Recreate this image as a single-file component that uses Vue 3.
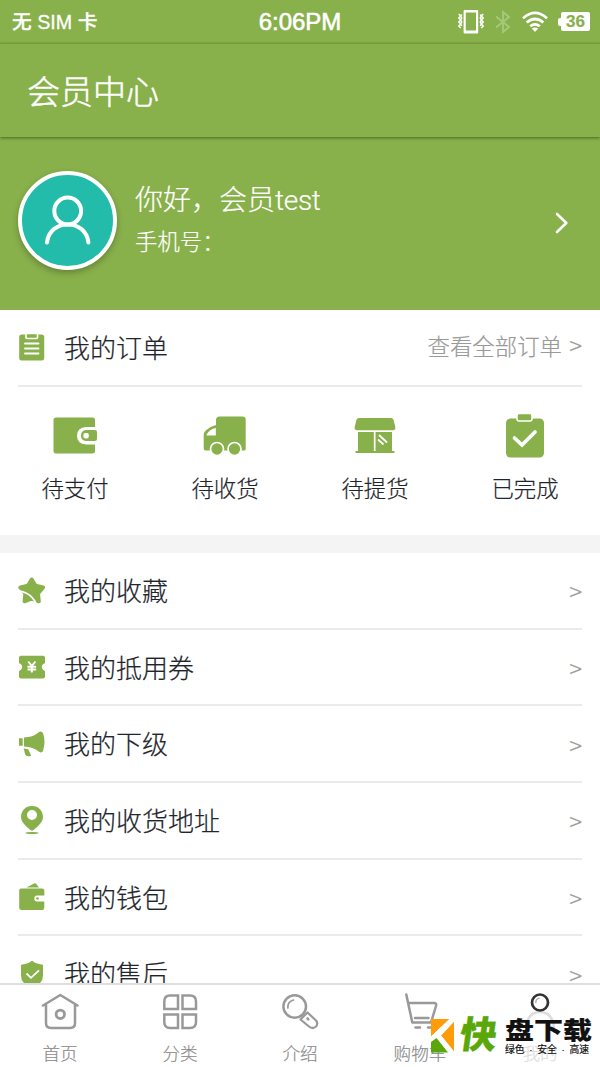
<script setup>
const orders = [
  { label: '待支付', icon: 'pay' },
  { label: '待收货', icon: 'truck' },
  { label: '待提货', icon: 'shop' },
  { label: '已完成', icon: 'done' },
]
const rows = [
  { label: '我的收藏', icon: 'star' },
  { label: '我的抵用券', icon: 'coupon' },
  { label: '我的下级', icon: 'horn' },
  { label: '我的收货地址', icon: 'pin' },
  { label: '我的钱包', icon: 'wallet' },
  { label: '我的售后', icon: 'shield' },
]
const tabs = [
  { label: '首页', icon: 'home' },
  { label: '分类', icon: 'grid' },
  { label: '介绍', icon: 'search' },
  { label: '购物车', icon: 'cart' },
  { label: '我的', icon: 'user' },
]
</script>

<template>
  <div class="screen">
    <div class="status">
      <span class="carrier">无 SIM 卡</span>
      <span class="time">6:06PM</span>
      <div class="indicators">
        <svg class="vibrate" width="26" height="26" viewBox="0 0 26 26" fill="none" stroke="#fff">
          <path fill="#fff" stroke="none" fill-rule="evenodd" d="M6.600 1h12.600q1 0 1 1v21.600q0 1-1 1H6.600q-1 0-1-1V2q0-1 1-1ZM7.800 3.500v18h10.200v-18Z" />
          <path stroke-width="1.500" d="M.7 5l2 2-2 2 2 2-2 2 2 2-2 2 2 2M3.700 5.500l-1 1.500 1 2-1 2 1 2-1 2 1 2M25.300 5l-2 2 2 2-2 2 2 2-2 2 2 2-2 2M22.300 5.500l1 1.500-1 2 1 2-1 2 1 2-1 2" />
        </svg>
        <svg class="bluetooth" width="16" height="24" viewBox="0 0 16 24" fill="none" stroke="#a5c978" stroke-width="1.900">
          <path d="M1 6.500 14 17l-6 5V2l6 5L1 17.500" />
        </svg>
        <svg class="wifi" width="26" height="22" viewBox="0 0 26 22" fill="none" stroke="#fff" stroke-width="2.700">
          <path d="M1 7.200Q13-3.400 25 7.200M4.600 11.500q8.400-7 16.800 0M8.200 15.300q4.800-4 9.600 0" />
          <path fill="#fff" stroke="none" d="m9.800 17.600 3.200 3.500 3.200-3.500q-3.200-2-6.400 0Z" />
        </svg>
        <div class="battery"><i></i><b>36</b></div>
      </div>
    </div>

    <header class="header">会员中心</header>

    <section class="profile">
      <div class="avatar">
        <svg width="46" height="50" viewBox="0 0 46 50" fill="none" stroke="#fff" stroke-width="4" stroke-linecap="round">
          <circle cx="22.700" cy="16" r="13.400" />
          <path d="M2 47.500C3.200 36 12.200 29.400 22.700 29.400S42.200 36 43.400 47.500" />
        </svg>
      </div>
      <div class="who">
        <div class="hello">你好，会员<span class="latin">test</span></div>
        <div class="phone">手机号：</div>
      </div>
      <svg class="enter" width="14" height="22" viewBox="0 0 14 22" fill="none" stroke="#fff" stroke-width="2.600" stroke-linecap="round" stroke-linejoin="round">
        <path d="m2 2 9.300 9-9.300 9" />
      </svg>
    </section>

    <section class="row order-head">
      <svg class="row-icon" width="28" height="28" viewBox="0 0 28 28">
        <rect x="1.200" y="1.500" width="25" height="26" rx="2.500" fill="#88b04b" />
        <path d="M8 1.500v3q0 1 1 1h9.500q1 0 1-1v-3q0-1-1-1H9q-1 0-1 1Z" fill="#88b04b" stroke="#fff" stroke-width="1.600" />
        <path d="M7 10.500h13.500M7 15.500h13.500M7 20.500h13.500" stroke="#fff" stroke-width="1.900" stroke-linecap="round" />
      </svg>
      <span class="row-label">我的订单</span>
      <span class="all">查看全部订单 <i class="gt">&gt;</i></span>
    </section>

    <section class="orders">
      <div v-for="o in orders" :key="o.icon" class="order">
        <svg width="46" height="46" viewBox="0 0 46 46" fill="#88b04b">
          <template v-if="o.icon === 'pay'">
            <rect x="1.500" y="4.500" width="41.500" height="36" rx="2.500" />
            <path fill="#fff" d="M44 14H34q-9 .5-9 8.700T34 31.500h10Z" />
            <path d="M43 17h-9q-5 .5-5 5.500t5 5.500h9q2 0 2-2v-7q0-2-2-2Z" />
            <rect x="31.400" y="20" width="5.400" height="5.400" rx="1.800" fill="#fff" />
          </template>
          <template v-else-if="o.icon === 'truck'">
            <path d="M17.500 3.500h23q3.200 0 3.200 3V36q0 1.500-1.500 1.500H3.700q-2 0-2-2V22q0-2.500 2-4.500 4.500-4.200 10.300-5.500V7q0-3.500 3.500-3.500Z" />
            <path fill="#fff" d="M13.800 15v7.500H5q-.8 0-.3-1 3-5.300 9.100-6.500Z" />
            <g stroke="#fff" stroke-width="1.700"><circle cx="15" cy="36" r="6.500" /><circle cx="32.500" cy="36" r="6.500" /></g>
          </template>
          <template v-else-if="o.icon === 'shop'">
            <path d="M7 5h32q2 0 2.600 2l1.700 7q.5 3.200-2.500 3.200H5.200q-3 0-2.500-3.200L4.400 7q.5-2 2.600-2Z" />
            <path d="M6 19h34v19h1.500q1.200 0 1.200 1t-1.200 1h-37q-1.200 0-1.200-1t1.200-1H6Z" />
            <path d="M22.700 19v19" stroke="#fff" stroke-width="1.700" />
            <path d="m27.500 22.500 7 6.500M26.500 27l4.500 4" stroke="#fff" stroke-width="1.800" stroke-linecap="round" />
          </template>
          <template v-else>
            <rect x="4" y="5.500" width="38" height="39" rx="4.500" />
            <path d="M15 6V2.500Q15 .5 17 .5h11q2 0 2 2V6q0 2-2 2H17q-2 0-2-2Z" stroke="#fff" stroke-width="1.600" />
            <path d="m12.500 25 7.500 7 13-13" fill="none" stroke="#fff" stroke-width="3.700" stroke-linecap="round" />
          </template>
        </svg>
        <span>{{ o.label }}</span>
      </div>
    </section>

    <section class="list">
      <div v-for="r in rows" :key="r.icon" class="row">
        <svg class="row-icon" width="28" height="28" viewBox="0 0 28 28" fill="#88b04b">
          <template v-if="r.icon === 'star'">
            <path d="m13.700 3.500 3.800 6.300 7.500 1.700-5 6 .8 7.800-7.100-2.800-7.100 2.800.8-7.800-5-6 7.500-1.700Z" stroke="#88b04b" stroke-width="4" stroke-linejoin="round" />
            <path d="M-1 14.800q5 .2 9.500 2.500 7 3.700 10.500 12" fill="none" stroke="#fff" stroke-width="1.700" />
          </template>
          <template v-else-if="r.icon === 'coupon'">
            <path d="M3 2.800h22q2 0 2 2v5.500q-3.200 1-3.200 3.800t3.200 3.800v5.600q0 2-2 2H3q-2 0-2-2v-5.600q3.200-1 3.200-3.800T1 10.300V4.800q0-2 2-2Z" />
            <path d="m10.200 8.500 3.600 4.500 3.600-4.500M13.800 13v6.500M9.500 13.700h8.600M9.500 16.600h8.600" fill="none" stroke="#fff" stroke-width="2" />
          </template>
          <template v-else-if="r.icon === 'horn'">
            <path d="M1 8.300h3.700v7.400H1Z M6 7.500q10-.5 15-5.500 2.500-1.500 4 1 3 8.500 0 18-1.300 2.500-4 .8-6-5-15-5.300Z M5.700 18.500l4.500.8 3 6.500q-5 1.500-6-1.300Z" />
          </template>
          <template v-else-if="r.icon === 'pin'">
            <path fill-rule="evenodd" d="M14 0C7.500 0 3 4.800 3 11c0 6.300 7.500 11 9.500 13q1.500 1.200 3 0C17.500 22 25 17.300 25 11 25 4.800 20.500 0 14 0Zm0 4a5 5 0 1 1 0 10 5 5 0 0 1 0-10Z" />
            <ellipse cx="14" cy="27" rx="6.500" ry="1" />
          </template>
          <template v-else-if="r.icon === 'wallet'">
            <path d="m8.500 4.500 7.500-4q1.500-.6 2.500.7l2.500 3.300Z M3 5.500h21q2.300 0 2.300 2v5H19q-2.700.3-2.700 3t2.700 3h7.300v6q0 2.500-2.300 2.500H3.500q-2.300 0-2.300-2.500v-17q0-2 1.800-2Z" />
            <path d="M26.300 13H20a2.500 2.500 0 0 0 0 5h6.300Z" fill="#fff" /><circle cx="19.500" cy="15.500" r="1.300" />
          </template>
          <template v-else>
            <path d="m14 .8 3 2q4 1.700 8 2v11q0 8-11 12.300Q3 23.800 3 15.800v-11q4-.3 8-2Z" />
            <path d="m8.500 13.500 4.500 4.300 8-7.500" fill="none" stroke="#fff" stroke-width="1.800" />
          </template>
        </svg>
        <span class="row-label">{{ r.label }}</span>
        <i class="gt">&gt;</i>
      </div>
    </section>

    <nav class="tabs">
      <div v-for="t in tabs" :key="t.icon" class="tab">
        <svg width="38" height="38" viewBox="0 0 38 38" fill="none" stroke="#999" stroke-width="2.500" stroke-linecap="round" stroke-linejoin="round">
          <template v-if="t.icon === 'home'">
            <path d="M2 13.500 19.300 3l17.200 10.500M5 12.500V31q0 5 5 5h19q5 0 5-5V12.500" /><circle cx="19.300" cy="22.300" r="4.200" stroke-width="2.800" />
          </template>
          <template v-else-if="t.icon === 'grid'">
            <path d="M9 3.500h8V17H3.300V9.500q0-6 5.700-6ZM21.500 3.500H29q6 0 6 6V17H21.500ZM3.300 22.500H17V36H9q-5.700 0-5.700-6ZM21.500 22.500H35V30q0 6-6 6h-7.500Z" stroke-linejoin="miter" />
          </template>
          <template v-else-if="t.icon === 'search'">
            <circle cx="13.700" cy="14.500" r="11.300" /><path d="M6.800 16Q6.500 9.500 12.500 8" stroke-width="1.700" />
            <path d="m19.500 27.500 7-7 8.500 8q2.500 3 0 6-3.500 3-7 0Z" stroke-width="2.200" /><path d="m26.500 26.500.8.800" stroke-width="2.600" />
          </template>
          <template v-else-if="t.icon === 'cart'">
            <path d="m5.300 2.500 6 28H30l5-16.500q.8-3-2-3H8M14 26h13.500M14.500 35.500h4.500M27 35.500h4.500" />
          </template>
          <template v-else>
            <path d="M5 36Q6.500 20 19 20T33 36" stroke="#ddd" /><circle cx="19" cy="10.500" r="8" stroke="#333" stroke-width="2.700" /><path d="M14.800 10.500q0-3.500 3.400-4.300" stroke="#aaa" stroke-width="1.300" />
          </template>
        </svg>
        <span :class="{ active: t.icon === 'user' }">{{ t.label }}</span>
      </div>
    </nav>

    <div class="mark">
      <svg width="24" height="34" viewBox="0 0 24 34">
        <path d="M0 0h18.500L0 17.500ZM23 2.500v30L10 16.500Z" fill="#ff9c08" />
        <path d="M18.500 0H23v2.500L10 16.500l13 16v1h-6L5.500 19 0 23v-5.500Z" fill="#fff" />
        <path d="m5.500 19 11.500 14.500H0V23Z" fill="#59a708" />
      </svg>
      <b class="fast">快</b>
      <div class="mark-text">
        <b>盘下载</b>
        <div class="motto"><span>绿色</span><span>·</span><span>安全</span><span>·</span><span>高速</span></div>
      </div>
    </div>
  </div>
</template>

<style>
body { background: #fff; overflow: hidden; }
</style>

<style scoped>
.screen {
  position: relative;
  width: 600px;
  height: 1067px;
  overflow: hidden;
  display: flex;
  flex-direction: column;
  background: #fff;
  font-family: "Liberation Sans", "Noto Sans CJK SC", sans-serif;
  font-weight: 300;
  color: #22242b;
  -webkit-text-stroke: .2px currentColor;
}
i { font-style: normal; }
svg { display: block; flex: none; }
.status {
  height: 44px;
  flex: none;
  box-sizing: border-box;
  padding: 0 10px 0 12px;
  border-bottom: 2px solid #7fa745;
  background: #88b04b;
  color: #fff;
  display: grid;
  grid-template-columns: 1fr auto 1fr;
  align-items: center;
}
.carrier { font-size: 19.700px; font-weight: 500; line-height: 42px; -webkit-text-stroke: .3px #fff; }
.time { font-size: 24px; line-height: 42px; padding: 1px 2px 0 0; -webkit-text-stroke: .6px #fff; }
.indicators { display: flex; align-items: center; justify-content: flex-end; }
.bluetooth { margin: 0 11px 0 11px; }
.wifi { margin-right: 10px; }
.battery { display: flex; align-items: center; }
.battery i { width: 3px; height: 8px; background: #fff; border-radius: 2px 0 0 2px; }
.battery b { width: 29px; height: 19px; border-radius: 2px; background: #fff; color: #88b04b; font-size: 17px; font-weight: 700; line-height: 20px; text-align: center; }
.header {
  height: 93px;
  flex: none;
  box-sizing: border-box;
  z-index: 1;
  background: #88b04b;
  color: #fff;
  font-size: 33px;
  line-height: 94px;
  padding: 2px 0 0 27px;
  box-shadow: 0 1px 3px rgba(40, 65, 10, .65);
  -webkit-text-stroke: .5px #fff;
}
.profile {
  height: 173px;
  flex: none;
  box-sizing: border-box;
  background: #88b04b;
  color: #fff;
  display: flex;
  align-items: center;
  padding: 0 31px 7px 18px;
}
.avatar {
  width: 91px;
  height: 91px;
  flex: none;
  border: 4px solid #fff;
  border-radius: 50%;
  background: #23bba9;
  display: flex;
  align-items: center;
  justify-content: center;
  box-shadow: 0 3px 6px rgba(0, 0, 0, .25);
}
.who { flex: 1; padding: 3px 0 0 18px; }
.hello { font-size: 28px; line-height: 42px; }
.latin { font-family: Roboto, "Liberation Sans", sans-serif; font-size: 28px; letter-spacing: -.3px; }
.phone { font-size: 22.400px; line-height: 41px; }
.enter { margin-top: 5px; }
.row {
  height: 76.700px;
  flex: none;
  box-sizing: border-box;
  margin: 0 18px;
  display: flex;
  align-items: center;
  border-bottom: 2px solid #ebebeb;
}
.row-label { flex: 1; padding: 3px 0 0 18px; font-size: 26px; line-height: 70px; }
.all { color: #999; font-size: 22.400px; margin-top: -5px; word-spacing: 1px; }
.gt { color: #999; font-family: "Noto Sans CJK SC", sans-serif; font-size: 24px; }
.list .gt { padding-top: 1px; }
.orders { height: 148.300px; flex: none; display: flex; }
.order { flex: 1; display: flex; flex-direction: column; align-items: center; padding-top: 26px; font-size: 22.400px; line-height: 32px; }
.order span { margin-top: 15px; }
.list { flex: 1; min-height: 0; overflow: hidden; border-top: 18px solid #f4f4f5; }
.tabs {
  height: 84px;
  flex: none;
  box-sizing: border-box;
  border-top: 2px solid #dedede;
  background: #fff;
  display: flex;
}
.tab { flex: 1; display: flex; flex-direction: column; align-items: center; padding-top: 7px; font-size: 17.600px; line-height: 26px; color: #8c8c8c; }
.tab span { margin-top: 11px; }
.tab .active { color: #ddd; }
.mark { position: absolute; left: 431px; top: 1018px; display: flex; align-items: center; height: 36px; }
.mark b { font-weight: 900; }
.fast { color: #59a708; font-size: 37px; line-height: 36px; margin-left: 5px; transform: skewX(-8deg); }
.mark-text { display: flex; flex-direction: column; margin-left: 8px; color: #111; }
.mark-text b { font-size: 29px; line-height: 26px; white-space: nowrap; transform: scaleY(.84); }
.motto { display: flex; justify-content: space-between; width: 84px; font-size: 9.800px; line-height: 11px; font-weight: 400; white-space: nowrap; }
</style>
